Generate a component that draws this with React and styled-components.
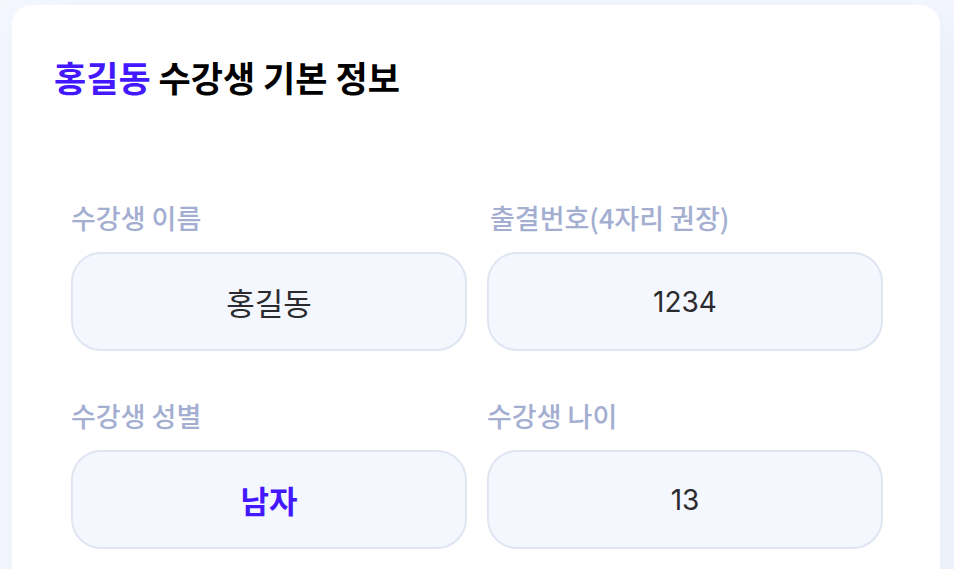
import React from "react";
import styled, { createGlobalStyle } from "styled-components";

const Global = createGlobalStyle`
  html, body { margin: 0; padding: 0; background: #f4f7fe; }
  body { font-family: "Inter", "Noto Sans CJK KR", sans-serif; }
  * { box-sizing: border-box; }
`;

const Page = styled.div`
  padding: 5px 14px 0 12px;
  height: 569px;
  overflow: hidden;
`;

const Card = styled.section`
  background: #ffffff;
  border-radius: 20px;
  box-shadow: 14px 17px 40px 4px rgba(112, 144, 176, 0.08);
  padding: 52px 56px 60px 42px;
  min-height: 640px;
`;

const Title = styled.h2`
  margin: 0;
  font-family: "Noto Sans CJK KR", sans-serif;
  font-size: 35px;
  line-height: 40px;
  font-weight: 700;
  color: #000000;
`;

const Accent = styled.span`
  color: #4318ff;
`;

const Form = styled.div`
  display: grid;
  grid-template-columns: 396px 396px;
  column-gap: 20px;
  row-gap: 48px;
  margin-top: 104px;
  padding-left: 17px;
`;

const Field = styled.label`
  display: flex;
  flex-direction: column;
  gap: 17px;
`;

const Label = styled.span`
  font-family: "Noto Sans CJK KR", sans-serif;
  font-size: 27px;
  line-height: 34px;
  font-weight: 500;
  color: #a3aed0;
  padding-left: ${(p) => p.$indent || 0}px;
`;

const Box = styled.div`
  height: 99px;
  border-radius: 30px;
  border: 2px solid #e0e5f2;
  background: #f4f7fe;
  display: flex;
  align-items: center;
  justify-content: center;
  font-family: ${(p) =>
    p.$digits ? `"Inter", sans-serif` : `"Noto Sans CJK KR", sans-serif`};
  font-size: ${(p) => (p.$digits ? 28 : 31)}px;
  font-weight: ${(p) => (p.$accent ? 700 : 400)};
  color: ${(p) => (p.$accent ? "#4318ff" : "#2b2b2f")};
`;

const fields = [
  { label: "수강생 이름", value: "홍길동" },
  { label: "출결번호(4자리 권장)", value: "1234", indent: 3, digits: true },
  { label: "수강생 성별", value: "남자", accent: true },
  { label: "수강생 나이", value: "13", digits: true },
];

export default function App() {
  return (
    <>
      <Global />
      <Page>
        <Card>
          <Title>
            <Accent>홍길동</Accent> 수강생 기본 정보
          </Title>
          <Form>
            {fields.map((f) => (
              <Field key={f.label}>
                <Label $indent={f.indent}>{f.label}</Label>
                <Box $accent={f.accent} $digits={f.digits}>
                  {f.value}
                </Box>
              </Field>
            ))}
          </Form>
        </Card>
      </Page>
    </>
  );
}
